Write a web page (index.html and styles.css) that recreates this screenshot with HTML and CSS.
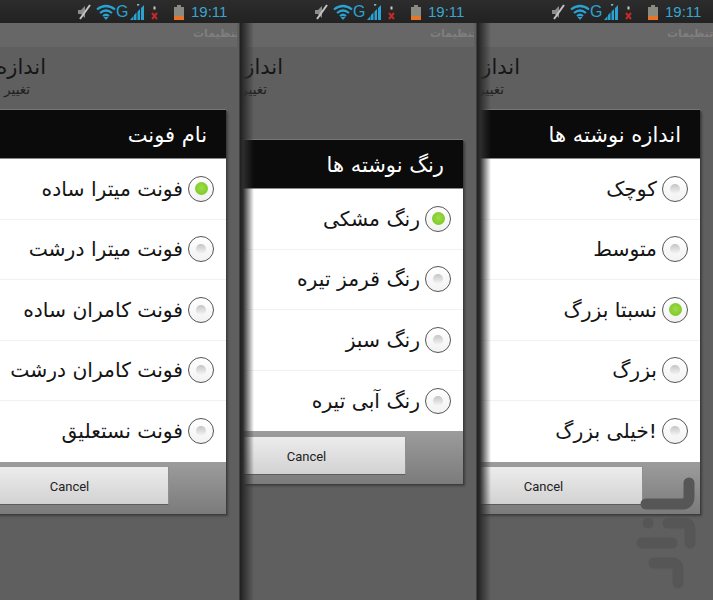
FILE: index.html
```html
<!DOCTYPE html>
<html lang="fa">
<head>
<meta charset="utf-8">
<title>تنظیمات</title>
<link rel="stylesheet" href="styles.css">
</head>
<body>
<svg class="defs" width="0" height="0" aria-hidden="true">
  <symbol id="status-icons" viewBox="0 0 108 16">
    <path d="M1 6h3l4-4v12l-4-4H1z" fill="#8c8c8c"/>
    <path d="M13 1 3 15" stroke="#c4c4c4" stroke-width="2" fill="none"/>
    <path d="M20 5.500q9-7 18 0M23 9q6-5 12 0M26 12q3-2.500 6 0" stroke="#2aa3d2" stroke-width="2.200" fill="none"/>
    <path d="M29 16l-2.500-3h5z" fill="#2aa3d2"/>
    <path d="M53 16l3.500-4v4zM57 16v-5l2.500-2.500V16zM60.500 16V7.500l2.500-2.500v11zM64 16V4l3-3v15z" fill="#2aa3d2"/>
    <path d="M60 0h2.500M61 0v2" stroke="#9adcf0" stroke-width="1" fill="none"/>
    <path d="M75 9l5 6M80 9l-5 6" stroke="#c42a2a" stroke-width="2" fill="none"/>
    <path d="M76.500 2.500h2v3h-2z" fill="#c9c9c9"/>
    <path d="M97 3h10v13H97z" fill="#8a8a80"/>
    <path d="M100 1h4v2h-4z" fill="#8a8a80"/>
    <path d="M97 12h10v4H97z" fill="#e8762a"/>
  </symbol>
</svg>
<main class="frame">

  <section class="panel">
    <div class="status"><svg class="status-icons"><use href="#status-icons"/></svg><span class="g">G</span><span class="time">19:11</span></div>
    <div class="title">تنظیمات</div>
    <div class="setting"><div class="setting-name">اندازه فونت</div><div class="setting-sub">تغییر اندازه</div></div>
    <div class="dialog">
      <h2 class="dialog-head">نام فونت</h2>
      <ul class="options">
        <li class="option"><span class="radio on"></span>فونت میترا ساده</li>
        <li class="option"><span class="radio"></span>فونت میترا درشت</li>
        <li class="option"><span class="radio"></span>فونت کامران ساده</li>
        <li class="option"><span class="radio"></span>فونت کامران درشت</li>
        <li class="option"><span class="radio"></span>فونت نستعلیق</li>
      </ul>
      <div class="dialog-foot"><button class="cancel">Cancel</button></div>
    </div>
  </section>

  <section class="panel shaded">
    <div class="status"><svg class="status-icons"><use href="#status-icons"/></svg><span class="g">G</span><span class="time">19:11</span></div>
    <div class="title">تنظیمات</div>
    <div class="setting"><div class="setting-name">اندازه فونت</div><div class="setting-sub">تغییر اندازه</div></div>
    <div class="dialog low">
      <h2 class="dialog-head">رنگ نوشته ها</h2>
      <ul class="options">
        <li class="option"><span class="radio on"></span>رنگ مشکی</li>
        <li class="option"><span class="radio"></span>رنگ قرمز تیره</li>
        <li class="option"><span class="radio"></span>رنگ سبز</li>
        <li class="option"><span class="radio"></span>رنگ آبی تیره</li>
      </ul>
      <div class="dialog-foot"><button class="cancel">Cancel</button></div>
    </div>
  </section>

  <section class="panel shaded last">
    <div class="status"><svg class="status-icons"><use href="#status-icons"/></svg><span class="g">G</span><span class="time">19:11</span></div>
    <div class="title">تنظیمات</div>
    <div class="setting"><div class="setting-name">اندازه فونت</div><div class="setting-sub">تغییر اندازه</div></div>
    <div class="dialog">
      <h2 class="dialog-head">اندازه نوشته ها</h2>
      <ul class="options">
        <li class="option"><span class="radio"></span>کوچک</li>
        <li class="option"><span class="radio"></span>متوسط</li>
        <li class="option"><span class="radio on"></span>نسبتا بزرگ</li>
        <li class="option"><span class="radio"></span>بزرگ</li>
        <li class="option"><span class="radio"></span>!خیلی بزرگ</li>
      </ul>
      <div class="dialog-foot"><button class="cancel">Cancel</button></div>
    </div>
  </section>

  <svg class="logo" viewBox="0 0 72 120" aria-hidden="true">
    <g fill="none" stroke="#565656" stroke-width="11" stroke-linecap="round" stroke-linejoin="round">
      <path d="M57 6v14q0 7-7 7H14"/>
      <path d="M16 46h.1"/>
      <path d="M36 46h16q6 0 6 6v14"/>
      <path d="M10 66h30"/>
      <path d="M22 86h18q6 0 6 6v14"/>
    </g>
  </svg>
</main>
</body>
</html>
```

FILE: styles.css
```css
* { box-sizing: border-box; }
html, body { margin: 0; padding: 0; background: #5f5f5f; }
.defs { position: absolute; }
.frame {
  position: relative;
  display: flex;
  width: 713px;
  height: 600px;
  overflow: hidden;
  font-family: "DejaVu Sans", "Noto Sans", sans-serif;
}
.panel {
  position: relative;
  flex: 0 0 237px;
  height: 600px;
  overflow: hidden;
  background: #5f5f5f;
}
.panel.last { flex-grow: 1; }
.panel.shaded::after {
  content: "";
  position: absolute;
  top: 23px;
  bottom: 0;
  left: 0;
  width: 20px;
  background: linear-gradient(to right, #5f5f5f 2px, #1f1f1f 3px, #2e2e2e 6px, rgba(50,50,50,0) 17px);
}
.status {
  display: flex;
  align-items: center;
  height: 23px;
  padding-left: 77px;
  background: linear-gradient(#2c2c2c, #222);
  position: relative;
}
.status-icons { width: 108px; height: 16px; flex: none; }
.g {
  position: absolute;
  left: 116px;
  top: 2px;
  font: 16px/19px "Liberation Sans", sans-serif;
  color: #2aa3d2;
}
.time {
  margin-left: 6px;
  font: 15px/19px "Liberation Sans", sans-serif;
  color: #3aa6cf;
}
.title {
  height: 24px;
  padding-left: 193px;
  background: #676767;
  color: #7f7f7f;
  font-size: 11px;
  font-weight: bold;
  line-height: 22px;
  white-space: nowrap;
}
.setting { padding-top: 5px; }
.setting-name, .setting-sub {
  direction: rtl;
  white-space: nowrap;
}
.setting-name { width: 46px; font-size: 21px; line-height: 30px; color: #161616; }
.setting-sub { width: 30px; font-size: 13.500px; line-height: 14px; color: #1f1f1f; }
.dialog {
  position: absolute;
  top: 110px;
  left: -36px;
  width: 262px;
  box-shadow: 1px 1px 0 #3d3d3d, 2px 2px 2px #404040, 0 -1px 0 #777;
  direction: rtl;
}
.dialog.low { top: 140px; }
.dialog-head {
  margin: 0;
  height: 49px;
  padding-right: 19px;
  background: #0b0b0b;
  border-bottom: 1px solid #8a8a8a;
  color: #fff;
  font-size: 21px;
  font-weight: normal;
  line-height: 50px;
}
.options { margin: 0; padding: 0; list-style: none; background: #fff; }
.option {
  display: flex;
  align-items: center;
  gap: 5px;
  height: 60.500px;
  padding-right: 12px;
  border-bottom: 1px solid #f1f1f1;
  color: #141414;
  font-size: 20.300px;
  white-space: nowrap;
}
.option:last-child { border-bottom: 0; }
.radio {
  flex: none;
  display: flex;
  align-items: center;
  justify-content: center;
  width: 26px;
  height: 26px;
  border: 1.500px solid #555;
  border-radius: 50%;
  background: linear-gradient(#fff, #f2f2f2);
}
.radio::before {
  content: "";
  width: 10px;
  height: 10px;
  border-radius: 50%;
  background: linear-gradient(#c4c4c4, #f6f6f6);
}
.radio.on::before { width: 13px; height: 13px; background: radial-gradient(circle at 50% 45%, #9fdc4a, #7fcb2a 70%, #b9e58a); }
.dialog-foot {
  height: 52px;
  padding: 5px 0 0 7px;
  direction: ltr;
  background: linear-gradient(#9c9c9c, #7b7b7b);
}
.low .dialog-foot { height: 53px; padding-top: 6px; }
.cancel {
  display: block;
  width: 198px;
  height: 38px;
  padding: 2px 0 0;
  border: 0;
  border-right: 1px solid #8f8f8f;
  border-bottom: 1px solid #5c5c5c;
  background: linear-gradient(#ececec, #d2d2d2);
  color: #222;
  font: 13px "Roboto", "Liberation Sans", sans-serif;
}
.logo {
  position: absolute;
  left: 632px;
  top: 477px;
  width: 72px;
  height: 120px;
}
```
